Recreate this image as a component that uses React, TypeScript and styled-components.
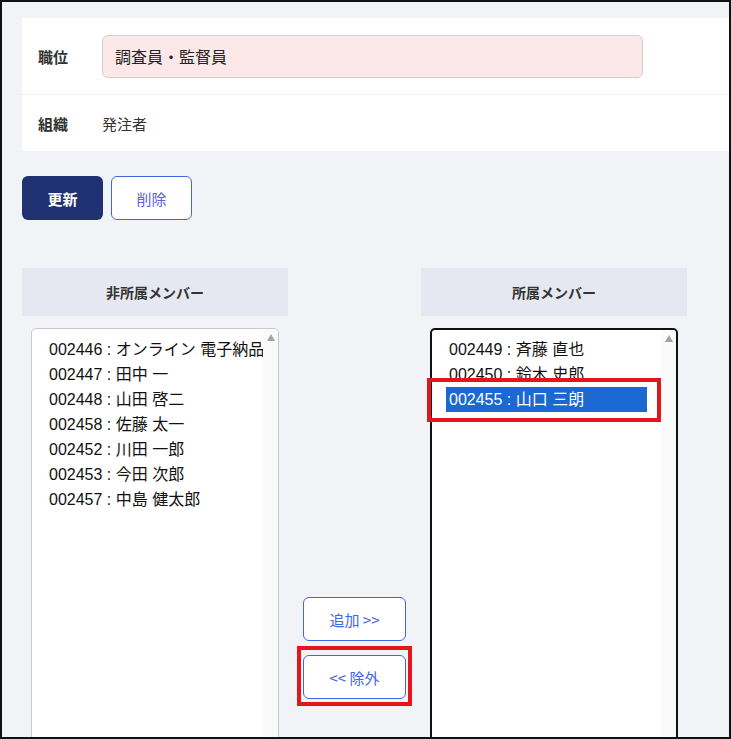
import styled, { createGlobalStyle } from "styled-components";

const GlobalStyle = createGlobalStyle`
    html, body {
        margin: 0;
        padding: 0;
        background: #000;
    }
    * {
        box-sizing: border-box;
    }
`;

const Frame = styled.div`
    width: 731px;
    height: 739px;
    border: 2px solid #111;
    background-color: #f2f3f7;
    overflow: hidden;
    padding: 16px 0 0 20px;
    font-family: "Noto Sans CJK JP", "Liberation Sans", sans-serif;
    color: #333;
`;

const Card = styled.section`
    background-color: #fff;
`;

const Row = styled.div<{ $h: number; $line?: boolean }>`
    display: flex;
    align-items: center;
    height: ${(p) => p.$h}px;
    padding-left: 16px;
    border-bottom: ${(p) => (p.$line ? "1px solid #eeeff2" : "none")};
`;

const Label = styled.div`
    width: 64px;
    font-size: 15px;
    font-weight: bold;
    color: #333;
`;

const Value = styled.div`
    font-size: 15px;
    color: #333;
`;

const Input = styled.input`
    width: 541px;
    height: 43px;
    border: 1px solid #d6cccc;
    border-radius: 6px;
    background-color: #fde8e9;
    padding: 0 12px;
    font-family: "Noto Sans CJK JP", sans-serif;
    font-size: 16px;
    color: #222;
    outline: none;
`;

const Actions = styled.div`
    display: flex;
    gap: 8px;
    margin-top: 25px;
`;

const Button = styled.button<{ $primary?: boolean }>`
    width: 81px;
    height: 44px;
    border-radius: 6px;
    font-family: "Noto Sans CJK JP", sans-serif;
    font-size: 15px;
    font-weight: ${(p) => (p.$primary ? "bold" : "normal")};
    background-color: ${(p) => (p.$primary ? "#1f3170" : "#fff")};
    color: ${(p) => (p.$primary ? "#fff" : "#5a62e0")};
    border: ${(p) => (p.$primary ? "none" : "1px solid #3f67e4")};
    cursor: pointer;
`;

const Transfer = styled.div`
    display: grid;
    grid-template-columns: 266px 133px 266px;
    margin-top: 48px;
`;

const ColumnHead = styled.div`
    height: 48px;
    background-color: #e5e8f0;
    display: flex;
    align-items: center;
    justify-content: center;
    font-size: 14px;
    font-weight: bold;
    color: #333;
`;

const ListBox = styled.div<{ $focused?: boolean }>`
    position: relative;
    margin: 12px 9px 0;
    height: 420px;
    display: flex;
    background-color: #fff;
    border: ${(p) => (p.$focused ? "2px solid #111" : "1px solid #c9c9c9")};
    border-radius: 5px;
`;

const Options = styled.ul<{ $focused?: boolean }>`
    flex: 1;
    margin: 0;
    list-style: none;
    padding: ${(p) => (p.$focused ? "7px 14px 0 14px" : "8px 14px 0 14px")};
    overflow: hidden;
    font-family: "Liberation Sans", "Noto Sans CJK JP", sans-serif;
    font-size: 16px;
`;

const Option = styled.li<{ $selected?: boolean }>`
    height: 25px;
    line-height: 25px;
    padding-left: 3px;
    white-space: nowrap;
    color: ${(p) => (p.$selected ? "#fff" : "#111")};
    background-color: ${(p) => (p.$selected ? "#1b67d3" : "transparent")};
`;

const Scrollbar = styled.div`
    width: 15px;
    flex-shrink: 0;
    background-color: #fafafa;
    border-radius: 0 4px 0 0;
    display: flex;
    justify-content: center;
    padding-top: 5px;
`;

const Arrow = styled.div`
    width: 0;
    height: 0;
    border-left: 4px solid transparent;
    border-right: 4px solid transparent;
    border-bottom: 7px solid #a3a3a3;
`;

const MoveButtons = styled.div`
    display: flex;
    flex-direction: column;
    align-items: center;
    gap: 14px;
    padding-top: 281px;
`;

const MoveButton = styled.button`
    position: relative;
    width: 103px;
    height: 44px;
    background-color: #fff;
    border: 1px solid #3f67e4;
    border-radius: 6px;
    color: #3f67e4;
    font-family: "Noto Sans CJK JP", sans-serif;
    font-size: 15px;
    cursor: pointer;
`;

// red call-out frame drawn over a control
const Callout = styled.span<{ $inset: string; $h?: number }>`
    position: absolute;
    inset: ${(p) => p.$inset};
    height: ${(p) => (p.$h ? `${p.$h}px` : "auto")};
    border: 4px solid #e3161b;
    pointer-events: none;
`;

const others = [
    "002446 : オンライン 電子納品",
    "002447 : 田中 一",
    "002448 : 山田 啓二",
    "002458 : 佐藤 太一",
    "002452 : 川田 一郎",
    "002453 : 今田 次郎",
    "002457 : 中島 健太郎",
];

const members = ["002449 : 斉藤 直也", "002450 : 鈴木 史郎", "002455 : 山口 三朗"];

export default function App() {
    return (
        <Frame>
            <GlobalStyle />
            <Card>
                <Row $h={77} $line>
                    <Label>職位</Label>
                    <Input defaultValue="調査員・監督員" />
                </Row>
                <Row $h={56}>
                    <Label>組織</Label>
                    <Value>発注者</Value>
                </Row>
            </Card>

            <Actions>
                <Button $primary>更新</Button>
                <Button>削除</Button>
            </Actions>

            <Transfer>
                <ColumnHead>非所属メンバー</ColumnHead>
                <div />
                <ColumnHead>所属メンバー</ColumnHead>

                <ListBox>
                    <Options>
                        {others.map((m) => (
                            <Option key={m}>{m}</Option>
                        ))}
                    </Options>
                    <Scrollbar>
                        <Arrow />
                    </Scrollbar>
                </ListBox>

                <MoveButtons>
                    <MoveButton>追加 &gt;&gt;</MoveButton>
                    <MoveButton>
                        &lt;&lt; 除外
                        <Callout $inset="-10px -7px -8px -7px" />
                    </MoveButton>
                </MoveButtons>

                <ListBox $focused>
                    <Options $focused>
                        {members.map((m, i) => (
                            <Option key={m} $selected={i === 2}>
                                {m}
                            </Option>
                        ))}
                    </Options>
                    <Scrollbar>
                        <Arrow />
                    </Scrollbar>
                    <Callout $inset="48px 15px auto -5px" $h={44} />
                </ListBox>
            </Transfer>
        </Frame>
    );
}
